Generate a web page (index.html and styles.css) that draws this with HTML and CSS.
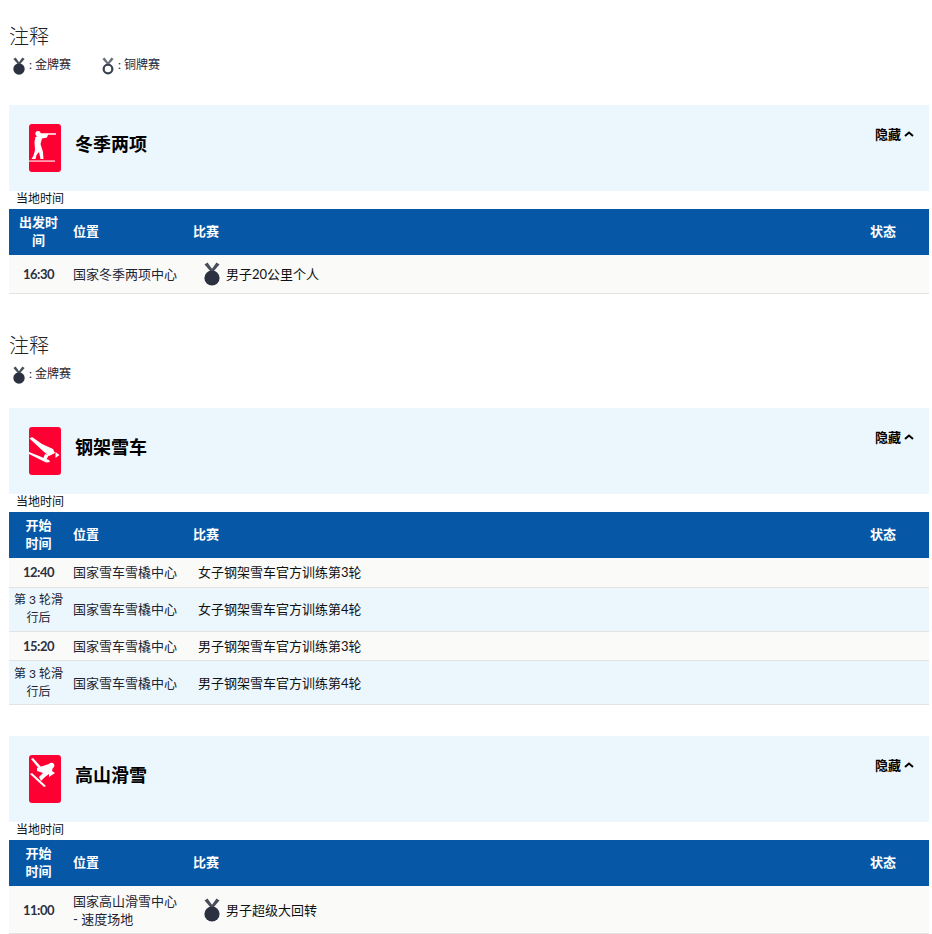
FILE: index.html
```html
<!DOCTYPE html>
<html lang="zh">
<head>
<meta charset="utf-8">
<title>赛程</title>
<link rel="stylesheet" href="styles.css">
</head>
<body>
<svg class="defs" width="0" height="0" aria-hidden="true">
  <defs>
    <symbol id="gold" viewBox="0 0 16 24">
      <path d="M0.5 2.5 L3.5 0.5 L8.5 7.5 L7 10 Z" fill="#484f5a"/>
      <path d="M15.5 2.5 L12.5 0.5 L7.5 7.5 L9 10 Z" fill="#484f5a"/>
      <circle cx="8" cy="16" r="7.6" fill="#2b3140"/>
    </symbol>
    <symbol id="bronze" viewBox="0 0 16 24">
      <path d="M0.5 2.5 L3.5 0.5 L8.5 7.5 L7 10 Z" fill="#6a707a"/>
      <path d="M15.5 2.5 L12.5 0.5 L7.5 7.5 L9 10 Z" fill="#6a707a"/>
      <circle cx="8" cy="16" r="5.8" fill="none" stroke="#3a4250" stroke-width="3"/>
    </symbol>
  </defs>
</svg>

<section class="legend">
  <h2 class="legend-title">注释</h2>
  <div class="legend-items">
    <span class="legend-item"><svg class="medal-small"><use href="#gold"/></svg>: 金牌赛</span>
    <span class="legend-item"><svg class="medal-small"><use href="#bronze"/></svg>: 铜牌赛</span>
  </div>
</section>

<section class="sport">
  <header class="sport-head">
    <svg class="pict" viewBox="0 0 32 48">
      <rect width="32" height="48" rx="3" fill="#ff0033"/>
      <circle cx="9" cy="9.5" r="2.6" fill="#fff"/>
      <path d="M9 9.3 H27 V10.7 H19 L18 13.5 L13 14.5 L11.5 20 L14 28 L14.5 35 L11.5 35 L10 28 L7.5 31 L6.5 35 L2.5 35 L4.5 31.5 L6 26 L5.5 18 L6.5 13 L10 11.5 Z" fill="#fff"/>
      <path d="M0 36.5 H26 V37.6 H0 Z" fill="#fff"/>
    </svg>
    <h3 class="sport-name">冬季两项</h3>
    <button class="toggle" type="button">隐藏<svg class="chev" viewBox="0 0 10 6"><path d="M1 5 L5 1.5 L9 5" fill="none" stroke="#000" stroke-width="2"/></svg></button>
  </header>
  <p class="local">当地时间</p>
  <table class="sched">
    <thead><tr><th class="c-time">出发时间</th><th class="c-loc">位置</th><th class="c-race">比赛</th><th class="c-state">状态</th></tr></thead>
    <tbody>
      <tr class="row-medal"><td class="c-time time">16:30</td><td class="c-loc">国家冬季两项中心</td><td class="c-race medal-cell"><span class="race-inner"><svg class="medal-big"><use href="#gold"/></svg>男子20公里个人</span></td><td></td></tr>
    </tbody>
  </table>
</section>

<section class="legend legend-second">
  <h2 class="legend-title">注释</h2>
  <div class="legend-items">
    <span class="legend-item"><svg class="medal-small"><use href="#gold"/></svg>: 金牌赛</span>
  </div>
</section>

<section class="sport">
  <header class="sport-head">
    <svg class="pict" viewBox="0 0 32 48">
      <rect width="32" height="48" rx="3" fill="#ff0033"/>
      <path d="M0.5 11.5 L3 10 L13 17 L24 22 L26 26 L20 29 L14 24 Z" fill="#fff"/>
      <path d="M26.5 25 L30.5 28 L26.5 31 Z" fill="#fff"/>
      <path d="M0 25 L20 33 L21 35 L17 35.5 L0 27 Z" fill="#fff"/>
      <path d="M16 27 L20 28 L17 33 L14 32 Z" fill="#fff"/>
    </svg>
    <h3 class="sport-name">钢架雪车</h3>
    <button class="toggle" type="button">隐藏<svg class="chev" viewBox="0 0 10 6"><path d="M1 5 L5 1.5 L9 5" fill="none" stroke="#000" stroke-width="2"/></svg></button>
  </header>
  <p class="local">当地时间</p>
  <table class="sched">
    <thead><tr><th class="c-time">开始<br>时间</th><th class="c-loc">位置</th><th class="c-race">比赛</th><th class="c-state">状态</th></tr></thead>
    <tbody>
      <tr class="row-a"><td class="c-time time">12:40</td><td class="c-loc">国家雪车雪橇中心</td><td class="c-race plain">女子钢架雪车官方训练第3轮</td><td></td></tr>
      <tr class="row-b"><td class="c-time note">第 3 轮滑行后</td><td class="c-loc">国家雪车雪橇中心</td><td class="c-race plain">女子钢架雪车官方训练第4轮</td><td></td></tr>
      <tr class="row-a"><td class="c-time time">15:20</td><td class="c-loc">国家雪车雪橇中心</td><td class="c-race plain">男子钢架雪车官方训练第3轮</td><td></td></tr>
      <tr class="row-b"><td class="c-time note">第 3 轮滑行后</td><td class="c-loc">国家雪车雪橇中心</td><td class="c-race plain">男子钢架雪车官方训练第4轮</td><td></td></tr>
    </tbody>
  </table>
</section>

<section class="sport sport-third">
  <header class="sport-head">
    <svg class="pict" viewBox="0 0 32 48">
      <rect width="32" height="48" rx="3" fill="#ff0033"/>
      <path d="M2 4 L4 3 L14 14 L12 16 Z" fill="#fff"/>
      <path d="M1 19 L3 18 L17 31 L15 32 Z" fill="#fff"/>
      <circle cx="22.5" cy="10.5" r="2.8" fill="#fff"/>
      <path d="M8 13 L20 9 L24 12 L23 16 L26 18 L20 22 L20 19 L16 22 L12 26 L10 22 L14 18 L8 16 Z" fill="#fff"/>
    </svg>
    <h3 class="sport-name">高山滑雪</h3>
    <button class="toggle" type="button">隐藏<svg class="chev" viewBox="0 0 10 6"><path d="M1 5 L5 1.5 L9 5" fill="none" stroke="#000" stroke-width="2"/></svg></button>
  </header>
  <p class="local">当地时间</p>
  <table class="sched">
    <thead><tr><th class="c-time">开始<br>时间</th><th class="c-loc">位置</th><th class="c-race">比赛</th><th class="c-state">状态</th></tr></thead>
    <tbody>
      <tr class="row-tall"><td class="c-time time">11:00</td><td class="c-loc">国家高山滑雪中心 - 速度场地</td><td class="c-race medal-cell"><span class="race-inner"><svg class="medal-big"><use href="#gold"/></svg>男子超级大回转</span></td><td></td></tr>
    </tbody>
  </table>
</section>
</body>
</html>
```

FILE: styles.css
```css
* { box-sizing: border-box; }

html, body { margin: 0; padding: 0; }

body {
  padding: 0 3px 0 9px;
  background: #fff;
  color: #1d2433;
  font-family: Lato, "Noto Sans CJK SC", sans-serif;
  font-size: 13px;
  line-height: 18px;
  overflow: hidden;
  height: 934px;
}

.defs { position: absolute; }

.legend { padding-top: 22px; height: 105px; }
.legend-second { height: 114px; padding-top: 37px; }

.legend-title {
  margin: 0;
  font-size: 20px;
  font-weight: 300;
  line-height: 28px;
  color: #222;
}

.legend-items { display: flex; gap: 30px; margin-top: 6px; padding-left: 4px; }

.legend-item {
  display: flex;
  align-items: center;
  font-size: 12px;
  line-height: 16px;
  width: 59px;
  white-space: nowrap;
}

.medal-small { width: 12px; height: 18px; margin-right: 4px; flex: none; position: relative; top: 1px; }

.sport-head {
  display: flex;
  align-items: flex-start;
  height: 86px;
  padding: 19px 15px 0 20px;
  background: #ebf6fd;
}

.pict { width: 32px; height: 48px; flex: none; }

.sport-name {
  margin: 0 0 0 14px;
  flex: 1;
  font-size: 18px;
  font-weight: 700;
  line-height: 40px;
  color: #000;
}

.toggle {
  display: flex;
  align-items: center;
  gap: 3px;
  margin: 0;
  padding: 0;
  border: 0;
  background: none;
  font: inherit;
  font-weight: 700;
  color: #000;
  line-height: 20px;
}

.chev { width: 10px; height: 6px; }

.local { margin: 0; padding-left: 7px; height: 18px; font-size: 12px; line-height: 16px; color: #111; }

.sched { width: 100%; border-collapse: separate; border-spacing: 0; table-layout: fixed; }

.sched th {
  height: 46px;
  padding: 0 0 2px;
  background: #0657a6;
  color: #fff;
  font-weight: 700;
  text-align: left;
  line-height: 18px;
}

.sched td { padding: 0; border-bottom: 1px solid #e3e3e3; vertical-align: middle; }

.sched th.c-time { width: 59px; padding: 0 5px 2px; text-align: center; }
.sched td.c-time { width: 59px; padding: 0 5px; text-align: center; }
.sched td.note { padding: 0 4px; font-size: 12px; }
.c-loc { width: 125px; }
.sched th.c-loc { padding-left: 5px; }
.sched td.c-loc { padding: 0 15px 0 5px; }
.c-race { width: auto; }
.sched th.c-state { width: 59px; }

.sched td.time { font-weight: 700; letter-spacing: -0.5px; color: #2b3140; }

.row-medal { height: 39px; background: #fafaf8; }
.row-tall { height: 48px; background: #fafaf8; }
.row-a { height: 29.5px; background: #fafaf8; }
.row-b { height: 44px; background: #ebf6fd; }

.sched td.plain { padding-left: 5px; color: #111; }

.medal-cell { color: #111; }
.race-inner { display: flex; align-items: center; }
.medal-big { width: 16px; height: 24px; margin: 0 6px 0 11px; flex: none; }

.sport-third { margin-top: 31px; }
```
